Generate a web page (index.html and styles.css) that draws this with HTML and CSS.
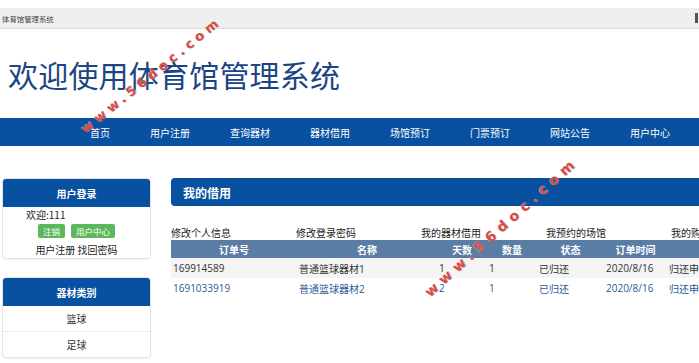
FILE: index.html
```html
<!DOCTYPE html>
<html lang="zh-CN">
<head>
<meta charset="utf-8">
<title>体育馆管理系统</title>
<link rel="stylesheet" href="styles.css">
</head>
<body>
<div class="topbar"><span class="tb-title">体育馆管理系统</span><span class="tb-mark"></span></div>
<header class="banner"><h1>欢迎使用体育馆管理系统</h1></header>
<nav class="nav">
  <a>首页</a><a>用户注册</a><a>查询器材</a><a>器材借用</a><a>场馆预订</a><a>门票预订</a><a>网站公告</a><a>用户中心</a>
</nav>
<div class="content">
  <aside class="sidebar">
    <section class="panel">
      <div class="panel-head">用户登录</div>
      <div class="login-body">
        <div class="welcome">欢迎:111</div>
        <div class="btns"><span class="btn">注销</span><span class="btn">用户中心</span></div>
        <div class="links">用户注册 找回密码</div>
      </div>
    </section>
    <section class="panel">
      <div class="panel-head">器材类别</div>
      <div class="cat">篮球</div>
      <div class="cat last">足球</div>
    </section>
  </aside>
  <main class="main">
    <div class="main-head">我的借用</div>
    <div class="sublinks">
      <span>修改个人信息</span><span>修改登录密码</span><span>我的器材借用</span><span>我预约的场馆</span><span>我的购票</span>
    </div>
    <table class="grid">
      <colgroup>
        <col class="c1"><col class="c2"><col class="c3"><col class="c4"><col class="c5"><col class="c6"><col class="c7">
      </colgroup>
      <thead>
        <tr><th>订单号</th><th>名称</th><th>天数</th><th>数量</th><th>状态</th><th>订单时间</th><th>归还申请</th></tr>
      </thead>
      <tbody>
        <tr class="odd"><td>169914589</td><td>普通篮球器材1</td><td>1</td><td>1</td><td>已归还</td><td>2020/8/16</td><td>归还申请</td></tr>
        <tr class="even"><td>1691033919</td><td>普通篮球器材2</td><td>2</td><td>1</td><td>已归还</td><td>2020/8/16</td><td>归还申请</td></tr>
      </tbody>
    </table>
  </main>
</div>
<div class="wm wm1">www.56doc.com</div>
<div class="wm wm2">www.56doc.com</div>
</body>
</html>
```
FILE: styles.css
```css
html, body {
  margin: 0;
  padding: 0;
  overflow: hidden;
  background: #fff;
}
body {
  width: 760px;
  font-family: "Open Sans", "Noto Sans CJK SC", sans-serif;
  font-size: 10px;
  color: #333;
  position: relative;
  height: 363px;
}
.topbar {
  margin-top: 8px;
  height: 20px;
  width: 699px;
  background: #efefef;
  border-bottom: 1px solid #dcdcdc;
  display: flex;
  align-items: center;
  justify-content: space-between;
}
.tb-title {
  font-family: "Noto Sans CJK SC", sans-serif;
  font-size: 7.4px;
  color: #444;
  padding-left: 2px;
}
.tb-mark {
  width: 3px;
  height: 10px;
  background: #555;
  margin-right: 1px;
}
.banner {
  height: 89px;
  display: flex;
  align-items: center;
  padding-left: 8px;
}
.banner h1 {
  margin: 0;
  font-family: "Noto Sans CJK SC", sans-serif;
  font-weight: 400;
  font-size: 30px;
  color: #1b4585;
  letter-spacing: 0.2px;
}
.nav {
  height: 28px;
  background: #0850a0;
  display: flex;
  align-items: center;
  padding-left: 70px;
}
.nav a {
  color: #fff;
  font-family: "Noto Sans CJK SC", sans-serif;
  font-size: 10px;
  padding: 0 20px;
}
.content {
  display: flex;
  gap: 20px;
  padding-left: 2px;
  margin-top: 32px;
}
.sidebar {
  width: 149px;
  display: flex;
  flex-direction: column;
  gap: 18px;
  flex: none;
}
.panel {
  border: 1px solid #e3e3e3;
  border-radius: 4px;
  box-shadow: 0 1px 2px rgba(0,0,0,0.05);
  overflow: hidden;
}
.panel-head {
  height: 28px;
  background: #0850a0;
  color: #fff;
  font-weight: 700;
  font-family: "Noto Sans CJK SC", sans-serif;
  font-size: 10px;
  display: flex;
  align-items: center;
  justify-content: center;
}
.login-body {
  padding: 1px 0 1px;
  font-family: "Noto Sans CJK SC", sans-serif;
}
.welcome {
  padding-left: 23px;
  line-height: 14px;
  font-size: 10px;
  color: #222;
}
.btns {
  display: flex;
  justify-content: center;
  gap: 6px;
  margin-top: 2px;
}
.btn {
  background: #5cb85c;
  color: #fff;
  font-size: 8.5px;
  height: 14px;
  line-height: 14px;
  padding: 0 5px;
  border-radius: 2px;
}
.links {
  text-align: center;
  line-height: 14px;
  margin-top: 5px;
  color: #222;
}
.cat {
  height: 25px;
  display: flex;
  align-items: center;
  justify-content: center;
  border-bottom: 1px dotted #ddd;
  font-family: "Noto Sans CJK SC", sans-serif;
  color: #333;
}
.cat.last {
  border-bottom: none;
}
.main {
  width: 620px;
  flex: none;
}
.main-head {
  height: 28px;
  background: #0850a0;
  border-radius: 4px;
  color: #fff;
  font-family: "Noto Sans CJK SC", sans-serif;
  font-weight: 700;
  font-size: 12px;
  display: flex;
  align-items: center;
  padding-left: 12px;
}
.sublinks {
  margin-top: 20px;
  display: flex;
  line-height: 14px;
  font-family: "Noto Sans CJK SC", sans-serif;
  color: #222;
}
.sublinks span {
  width: 125px;
  flex: none;
}
.grid {
  border-collapse: collapse;
  table-layout: fixed;
  width: 600px;
}
.c1 { width: 126px; }
.c2 { width: 140px; }
.c3 { width: 50px; }
.c4 { width: 50px; }
.c5 { width: 67px; }
.c6 { width: 63px; }
.c7 { width: 104px; }
.grid th {
  background: #5a7da5;
  color: #fff;
  font-family: "Noto Sans CJK SC", sans-serif;
  font-weight: 700;
  font-size: 10px;
  height: 18px;
  padding: 0;
  text-align: center;
}
.grid td {
  height: 20px;
  padding: 0 2px;
  text-align: left;
  font-size: 10px;
  white-space: nowrap;
  overflow: hidden;
}
.grid tr.odd td {
  background: #f4f4f4;
  color: #333;
}
.grid tr.even td {
  color: #2d5a98;
}
.wm {
  position: absolute;
  font-family: "DejaVu Sans", sans-serif;
  font-weight: 700;
  color: #dc4a48;
  line-height: 16px;
  white-space: nowrap;
  transform-origin: 0 100%;
  text-shadow: 0.6px 0.6px 0 rgba(110,110,110,0.55), -0.4px -0.4px 0 rgba(255,255,255,0.8);
  pointer-events: none;
}
.wm1 {
  left: 88px;
  top: 121px;
  font-size: 13px;
  letter-spacing: 4.4px;
  transform: rotate(-39deg);
}
.wm2 {
  left: 432px;
  top: 284px;
  font-size: 14px;
  letter-spacing: 5.6px;
  transform: rotate(-42deg);
}
```
